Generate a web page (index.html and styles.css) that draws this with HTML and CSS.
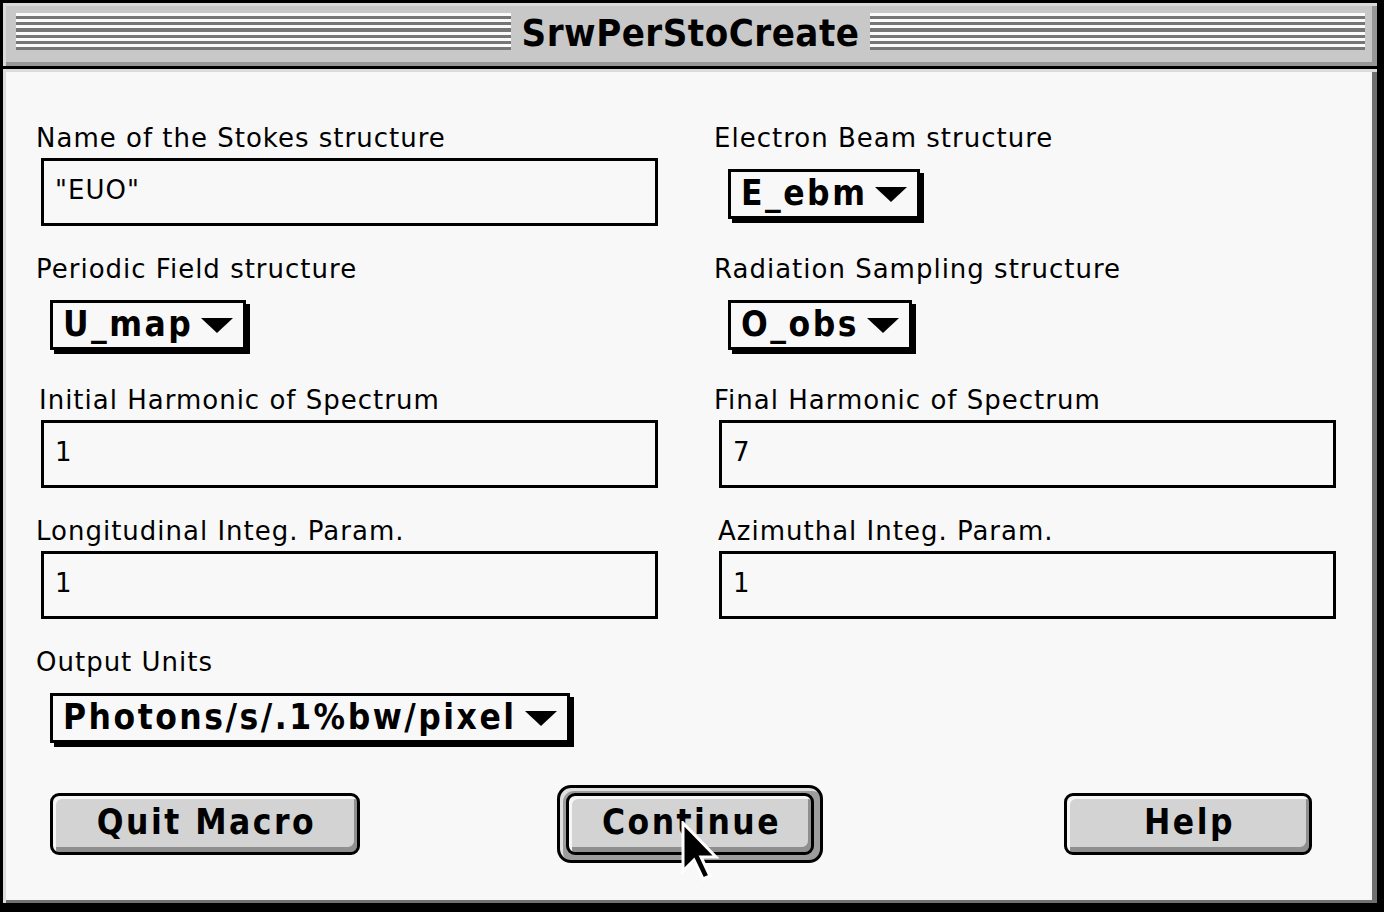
FILE: index.html
```html
<!DOCTYPE html>
<html>
<head>
<meta charset="utf-8">
<link rel="stylesheet" href="styles.css">
</head>
<body>
<div class="window">
  <div class="titlebar">
    <div class="stripes"></div>
    <div class="title chicago">SrwPerStoCreate</div>
    <div class="stripes"></div>
  </div>
  <div class="content">
    <div class="grid">
      <div class="cell">
        <div class="lbl">Name of the Stokes structure</div>
        <div class="field">"EUO"</div>
      </div>
      <div class="cell">
        <div class="lbl">Electron Beam structure</div>
        <div class="popup chicago"><span>E_ebm</span><svg class="arrow" width="32" height="15" viewBox="0 0 32 15"><polygon points="0,0 32,0 16,15"/></svg></div>
      </div>
      <div class="cell">
        <div class="lbl">Periodic Field structure</div>
        <div class="popup chicago"><span>U_map</span><svg class="arrow" width="32" height="15" viewBox="0 0 32 15"><polygon points="0,0 32,0 16,15"/></svg></div>
      </div>
      <div class="cell">
        <div class="lbl">Radiation Sampling structure</div>
        <div class="popup chicago"><span>O_obs</span><svg class="arrow" width="32" height="15" viewBox="0 0 32 15"><polygon points="0,0 32,0 16,15"/></svg></div>
      </div>
      <div class="cell">
        <div class="lbl shift3">Initial Harmonic of Spectrum</div>
        <div class="field">1</div>
      </div>
      <div class="cell">
        <div class="lbl">Final Harmonic of Spectrum</div>
        <div class="field">7</div>
      </div>
      <div class="cell">
        <div class="lbl">Longitudinal Integ. Param.</div>
        <div class="field">1</div>
      </div>
      <div class="cell">
        <div class="lbl shift4">Azimuthal Integ. Param.</div>
        <div class="field">1</div>
      </div>
      <div class="cell">
        <div class="lbl">Output Units</div>
        <div class="popup chicago"><span>Photons/s/.1%bw/pixel</span><svg class="arrow" width="32" height="15" viewBox="0 0 32 15"><polygon points="0,0 32,0 16,15"/></svg></div>
      </div>
      <div class="cell"></div>
    </div>
    <div class="buttons">
      <div class="btn btn-quit chicago">Quit Macro</div>
      <div class="ring"><div class="btn btn-cont chicago">Continue</div></div>
      <div class="btn btn-help chicago">Help</div>
    </div>
  </div>
  <svg class="cursor" width="40" height="60" viewBox="-2 -2 40 60"><polygon points="0,0 0,48 11,37 20,56 27,53 18,34 33,34" fill="#000" stroke="#fff" stroke-width="3" stroke-linejoin="miter"/></svg>
</div>
</body>
</html>
```
FILE: styles.css
```css
html, body {
  margin: 0;
  padding: 0;
  background: #000;
}
.window {
  position: relative;
  width: 1384px;
  height: 912px;
  box-sizing: border-box;
  padding: 3px 7px 9px 3px;
  background: #000;
  display: flex;
  flex-direction: column;
  overflow: hidden;
}
.titlebar {
  height: 63px;
  flex: none;
  box-sizing: border-box;
  background: #c8c8c8;
  box-shadow: inset 3px 3px 0 #dadada, inset -5px -4px 0 #979797;
  margin-bottom: 3px;
  padding: 10px 12px 0 13px;
  display: flex;
  align-items: flex-start;
}
.stripes {
  flex: 1;
  height: 37px;
  background: repeating-linear-gradient(to bottom, #fbfbfb 0 3.1px, #767676 3.1px 6.2px);
}
.chicago {
  font-family: "DejaVu Sans Condensed", "DejaVu Sans", sans-serif;
  font-stretch: condensed;
  font-weight: bold;
  color: #000;
}
.title {
  font-size: 38px;
  line-height: 37px;
  letter-spacing: 0.5px;
  margin: 2px 11px 0 11px;
  white-space: nowrap;
}
.content {
  flex: 1;
  background: #f8f8f8;
  box-shadow: inset 3px 3px 0 #dcdcdc, inset -5px -3px 0 #707070;
  padding: 54px 0 0 33px;
  box-sizing: border-box;
}
.grid {
  display: grid;
  grid-template-columns: 678px 1fr;
  grid-auto-rows: 131px;
}
.cell {
  display: flex;
  flex-direction: column;
  align-items: flex-start;
}
.lbl {
  font-family: "DejaVu Sans", sans-serif;
  font-size: 26px;
  line-height: 30px;
  letter-spacing: 1px;
  color: #000;
  white-space: nowrap;
}
.shift3 { padding-left: 3px; }
.shift4 { padding-left: 4px; }
.field {
  margin: 5px 0 0 5px;
  width: 617px;
  height: 68px;
  box-sizing: border-box;
  border: 3px solid #000;
  background: #f8f8f8;
  display: flex;
  align-items: center;
  padding: 0 0 5px 11px;
  font-family: "DejaVu Sans", sans-serif;
  font-size: 26px;
  letter-spacing: 1px;
  color: #000;
}
.popup {
  margin: 16px 0 0 14px;
  height: 50px;
  box-sizing: border-box;
  border: 3px solid #000;
  box-shadow: 4px 4px 0 #000;
  background: #f8f8f8;
  display: inline-flex;
  align-items: center;
  gap: 8px;
  padding: 0 10px 2px 10px;
  font-size: 35px;
  letter-spacing: 2.5px;
  white-space: nowrap;
}
.arrow {
  flex: none;
  margin-top: 3px;
}
.arrow polygon { fill: #000; }
.buttons {
  display: flex;
  align-items: center;
  margin-top: 7px;
}
.btn {
  height: 62px;
  box-sizing: border-box;
  border: 3px solid #000;
  border-radius: 9px;
  background: #d3d3d3;
  box-shadow: inset 3px 3px 0 #f6f6f6, inset -3px -5px 0 #8f8f8f;
  display: flex;
  align-items: center;
  justify-content: center;
  padding: 0 0 4px 3px;
  font-size: 35px;
  letter-spacing: 2.5px;
  white-space: nowrap;
}
.btn-quit { width: 310px; margin-left: 14px; }
.btn-cont { width: 248px; }
.btn-help { width: 248px; margin-left: 241px; }
.ring {
  margin-left: 197px;
  border: 3px solid #000;
  border-radius: 14px;
  padding: 5px 6px;
  background: #9c9c9c;
  box-shadow: inset 3px 3px 0 #e0e0e0;
}
.cursor {
  position: absolute;
  left: 681px;
  top: 821px;
}
```
